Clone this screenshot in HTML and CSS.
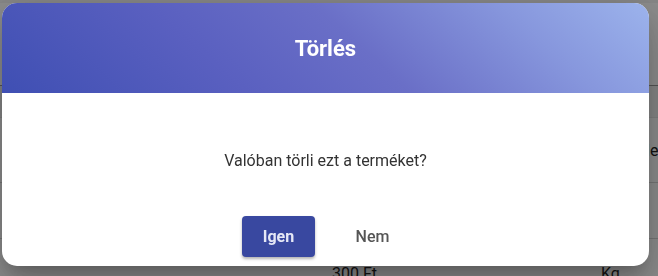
FILE: index.html
```html
<!DOCTYPE html>
<html lang="hu">
<head>
<meta charset="utf-8">
<title>Törlés</title>
<link rel="stylesheet" href="styles.css">
</head>
<body>
<div class="page">
  <div class="topbar"></div>
  <div class="row row-top"></div>
  <div class="row row-head"></div>
  <div class="row row-a"><span class="cell-far">Megj</span></div>
  <div class="row row-b"></div>
  <div class="row row-c"><span></span><span>300 Ft</span><span>Kg</span></div>
</div>
<div class="overlay">
  <div class="dialog">
    <div class="dialog-header">Törlés</div>
    <div class="dialog-body">
      <p class="message">Valóban törli ezt a terméket?</p>
      <div class="actions">
        <button class="btn btn-primary">Igen</button>
        <button class="btn btn-text">Nem</button>
      </div>
    </div>
  </div>
</div>
</body>
</html>
```

FILE: styles.css
```css
* { box-sizing: border-box; }
html, body {
  margin: 0;
  padding: 0;
  width: 658px;
  height: 276px;
  overflow: hidden;
  font-family: Roboto, "Liberation Sans", sans-serif;
  background: #ffffff;
}
.page {
  display: flex;
  flex-direction: column;
  color: #222;
  font-size: 16px;
}
.topbar { height: 3px; background: #f4f4f4; }
.row { border-bottom: 1px solid #d6d6d6; }
.row-top { height: 83px; border-bottom-color: #9a9a9a; }
.row-head { height: 32px; background: #f2f2f2; border-bottom-color: #e6e6e6; }
.row-a { height: 65px; padding: 23px 0 0 636px; }
.row-b { height: 56px; }
.row-c {
  height: 37px;
  display: grid;
  grid-template-columns: 332px 269px auto;
  padding-top: 25px;
  border-bottom: none;
}
.overlay {
  position: fixed;
  inset: 0;
  background: rgba(0, 0, 0, 0.45);
  display: flex;
  padding: 3px 9px 10px 2px;
}
.dialog {
  flex: 1;
  display: flex;
  flex-direction: column;
  background: #ffffff;
  border-radius: 15px;
  overflow: hidden;
  box-shadow: 0 11px 15px -7px rgba(0,0,0,.2), 0 24px 38px 3px rgba(0,0,0,.14), 0 9px 46px 8px rgba(0,0,0,.12);
}
.dialog-header {
  height: 90px;
  display: flex;
  align-items: center;
  justify-content: center;
  color: #ffffff;
  font-size: 22px;
  font-weight: 700;
  background: linear-gradient(42deg, #3f4fb3 0%, #5a60c0 33%, #6a6fc7 55%, #8797dd 80%, #9cb3ec 100%);
}
.dialog-body {
  flex: 1;
  display: flex;
  flex-direction: column;
  align-items: center;
  padding: 58px 0 9px;
}
.message {
  margin: 0;
  font-size: 16px;
  line-height: 19px;
  color: #333333;
}
.actions {
  margin-top: auto;
  display: flex;
  gap: 21px;
}
.btn {
  width: 73px;
  height: 41px;
  border: none;
  border-radius: 4px;
  font-family: Roboto, "Liberation Sans", sans-serif;
  font-size: 16px;
  cursor: pointer;
}
.btn-primary {
  background: #3948a0;
  color: #e6e8f6;
  font-weight: 700;
  box-shadow: 0 2px 3px rgba(0,0,0,.3);
}
.btn-text {
  background: transparent;
  color: #555555;
  font-weight: 500;
}
```
